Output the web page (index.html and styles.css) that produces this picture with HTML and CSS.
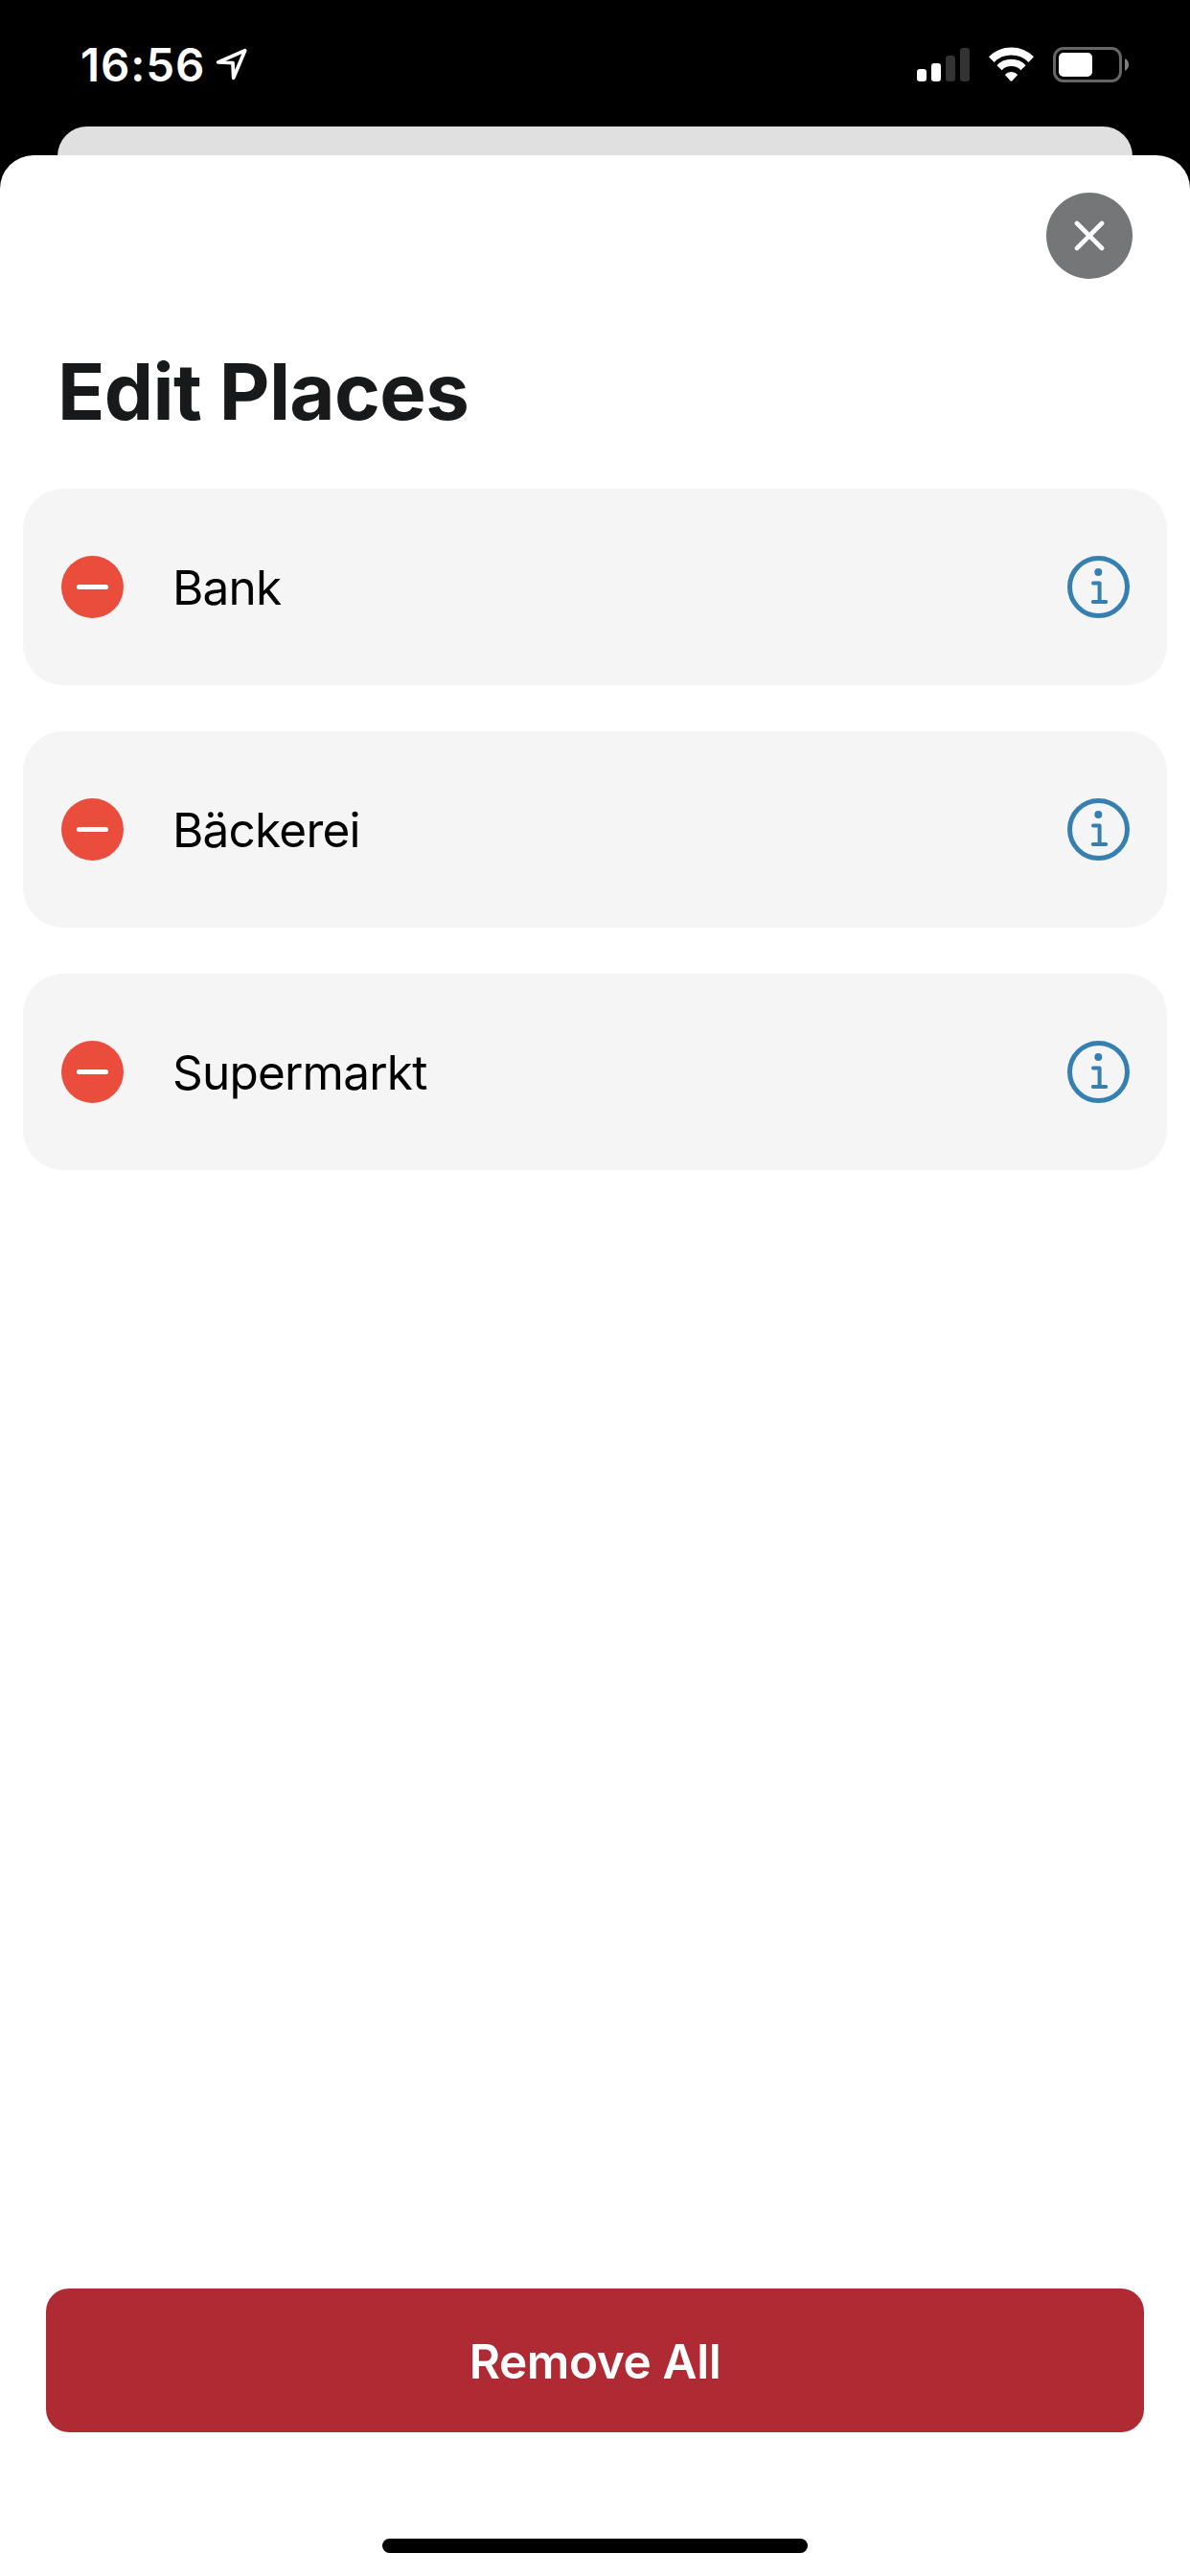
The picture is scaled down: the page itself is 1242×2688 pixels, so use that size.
FILE: index.html
```html
<!DOCTYPE html>
<html lang="en">
<head>
<meta charset="utf-8">
<title>Edit Places</title>
<link rel="stylesheet" href="styles.css">
</head>
<body>
<div class="screen">
  <header class="status">
    <div class="status-left">
      <span class="time">16:56</span>
      <svg class="location" viewBox="0 0 36 36"><path d="M32.7 4.7 4.7 17 20 17.6 20.7 33.3Z"/></svg>
    </div>
    <svg class="status-icons" viewBox="0 0 222 37">
      <g fill="#fff">
        <rect x="0" y="23" width="10" height="13" rx="3.2"/>
        <rect x="15" y="17" width="10" height="19" rx="3.2"/>
      </g>
      <g fill="#333">
        <rect x="30" y="9" width="10" height="27" rx="3.2"/>
        <rect x="45" y="1" width="10" height="35" rx="3.2"/>
      </g>
      <g transform="translate(98.5 34)">
        <path d="M-20.7-20.9A29.3 29.3 0 0 1 20.7-20.9" fill="none" stroke="#fff" stroke-width="8"/>
        <path d="M-12.5-12.3A17.5 17.5 0 0 1 12.5-12.3" fill="none" stroke="#fff" stroke-width="7.2"/>
        <path d="M-6.7-5.1A9.4 9.4 0 0 1 6.7-5.1L.8 1.4Q0 2.2-.8 1.4Z" fill="#fff"/>
      </g>
      <rect x="143.5" y="1.5" width="69" height="34" rx="9.5" fill="none" stroke="#666" stroke-width="3"/>
      <rect x="148" y="6" width="35" height="25" rx="5" fill="#fff"/>
      <path d="M217 12C222.4 14.4 222.4 22.6 217 25Z" fill="#808080"/>
    </svg>
  </header>
  <div class="sheet-behind"></div>
  <main class="sheet">
    <div class="toolbar">
      <button class="close" aria-label="Close">
        <svg viewBox="0 0 90 90"><path d="M32 32 58 58M58 32 32 58"/></svg>
      </button>
    </div>
    <h1 class="title">Edit Places</h1>
    <ul class="places">
      <li class="place">
        <svg class="remove" viewBox="0 0 65 65"><circle cx="32.5" cy="32.5" r="32.5"/><path d="M18.5 32.5H46.5"/></svg>
        <span class="name">Bank</span>
        <svg class="info" viewBox="0 0 65 65"><circle class="ring" cx="32.5" cy="32.5" r="30"/><circle class="dot" cx="32.3" cy="17" r="4"/><path d="M27 28.4H33.6V48M26.8 48H40.2"/></svg>
      </li>
      <li class="place">
        <svg class="remove" viewBox="0 0 65 65"><circle cx="32.5" cy="32.5" r="32.5"/><path d="M18.5 32.5H46.5"/></svg>
        <span class="name">Bäckerei</span>
        <svg class="info" viewBox="0 0 65 65"><circle class="ring" cx="32.5" cy="32.5" r="30"/><circle class="dot" cx="32.3" cy="17" r="4"/><path d="M27 28.4H33.6V48M26.8 48H40.2"/></svg>
      </li>
      <li class="place">
        <svg class="remove" viewBox="0 0 65 65"><circle cx="32.5" cy="32.5" r="32.5"/><path d="M18.5 32.5H46.5"/></svg>
        <span class="name">Supermarkt</span>
        <svg class="info" viewBox="0 0 65 65"><circle class="ring" cx="32.5" cy="32.5" r="30"/><circle class="dot" cx="32.3" cy="17" r="4"/><path d="M27 28.4H33.6V48M26.8 48H40.2"/></svg>
      </li>
    </ul>
    <button class="remove-all">Remove All</button>
    <div class="home-indicator"></div>
  </main>
</div>
</body>
</html>
```
FILE: styles.css
```css
* {
  box-sizing: border-box;
}

body {
  margin: 0;
  background: #000;
  font-family: Inter, "Liberation Sans", sans-serif;
}

button {
  border: 0;
  padding: 0;
  font-family: inherit;
}

svg {
  display: block;
  flex: none;
}

.screen {
  display: flex;
  flex-direction: column;
  width: 1242px;
  height: 2688px;
  overflow: hidden;
}

/* Status bar */
.status {
  display: flex;
  justify-content: space-between;
  flex: none;
  height: 132px;
  padding: 39px 63px 0 84px;
  color: #fff;
}

.status-left {
  display: flex;
  gap: 9px;
}

.time {
  font-size: 47.5px;
  font-weight: 600;
  line-height: 57px;
  letter-spacing: 0.9px;
}

.location {
  width: 36px;
  height: 36px;
  margin-top: 9px;
  fill: none;
  stroke: #fff;
  stroke-width: 3.7;
  stroke-linejoin: round;
}

.status-icons {
  width: 222px;
  height: 37px;
  margin-top: 10px;
}

/* Stacked sheets */
.sheet-behind {
  flex: none;
  height: 70px;
  margin: 0 60px -40px;
  border-radius: 31px 31px 0 0;
  background: #e0e0e0;
}

.sheet {
  display: flex;
  flex-direction: column;
  flex: 1;
  position: relative;
  border-radius: 35px 35px 0 0;
  background: #fff;
}

.toolbar {
  display: flex;
  justify-content: flex-end;
  padding: 39px 60px 0;
}

.close {
  width: 90px;
  height: 90px;
  border-radius: 50%;
  background: #757678;
}

.close path {
  stroke: #fff;
  stroke-width: 4.6;
  stroke-linecap: round;
}

.title {
  margin: 68px 60px 0;
  color: #18191b;
  font-size: 81.5px;
  font-weight: 700;
  line-height: 99px;
  letter-spacing: -0.67px;
}

/* Place list */
.places {
  display: flex;
  flex-direction: column;
  gap: 48px;
  margin: 52px 24px 0;
  padding: 0;
  list-style: none;
}

.place {
  display: flex;
  align-items: center;
  height: 205px;
  padding: 0 39px 0 40px;
  border-radius: 42px;
  background: #f5f5f5;
}

.remove {
  width: 65px;
  height: 65px;
  fill: #eb4d3d;
}

.remove path {
  stroke: #fff;
  stroke-width: 5;
  stroke-linecap: round;
}

.name {
  flex: 1;
  margin-left: 51px;
  color: #000;
  font-size: 49.5px;
  line-height: 60px;
  letter-spacing: -0.8px;
}

.info {
  width: 65px;
  height: 65px;
  fill: none;
  stroke: #3580b0;
  stroke-width: 4;
  stroke-linecap: round;
  stroke-linejoin: round;
}

.info .ring {
  stroke-width: 5;
}

.info .dot {
  fill: #3580b0;
  stroke: none;
}

/* Footer */
.remove-all {
  height: 150px;
  margin: auto 48px 0;
  padding-top: 1px;
  border-radius: 24px;
  background: #b02a33;
  color: #fff;
  font-size: 49.5px;
  font-weight: 600;
  line-height: 60px;
  letter-spacing: -0.4px;
}

.home-indicator {
  width: 444px;
  height: 15px;
  margin: 111px auto 24px;
  border-radius: 8px;
  background: #000;
}
```
